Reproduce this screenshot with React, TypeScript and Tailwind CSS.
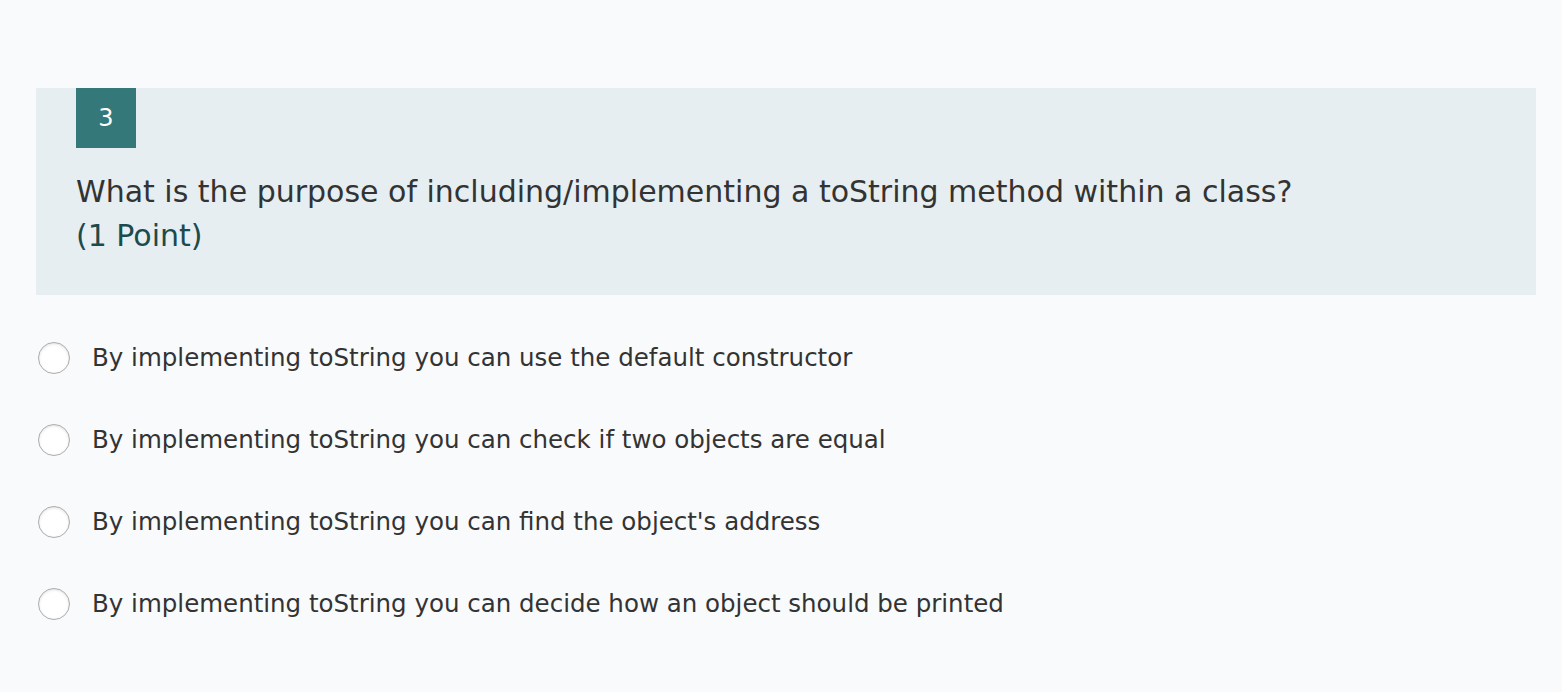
const options = [
  'By implementing toString you can use the default constructor',
  'By implementing toString you can check if two objects are equal',
  "By implementing toString you can find the object's address",
  'By implementing toString you can decide how an object should be printed',
];

export default function App() {
  return (
    <div className="min-h-[692px] w-full bg-[#f9fafb] pt-[88px] font-['DejaVu_Sans',sans-serif]">
      <div className="ml-[36px] h-[207px] w-[1500px] bg-[#e6eef1] px-[40px]">
        <div className="flex h-[60px] w-[60px] items-center justify-center bg-[#35787a] text-[24px] text-white">
          3
        </div>
        <div className="mt-[22px] text-[30px] leading-[44px] text-[#333333]">
          What is the purpose of including/implementing a toString method within a class?
        </div>
        <div className="text-[30px] leading-[44px] text-[#1d4a4c]">(1 Point)</div>
      </div>
      <div className="mt-[47px] flex flex-col gap-[50px] pl-[38px]">
        {options.map((o) => (
          <label key={o} className="flex h-[32px] items-center gap-[22px]">
            <span className="h-[32px] w-[32px] rounded-full border border-[#acacac] bg-white shadow-[inset_0_1px_3px_rgba(0,0,0,0.12)]" />
            <span className="text-[24.5px] text-[#333333]">{o}</span>
          </label>
        ))}
      </div>
    </div>
  );
}
